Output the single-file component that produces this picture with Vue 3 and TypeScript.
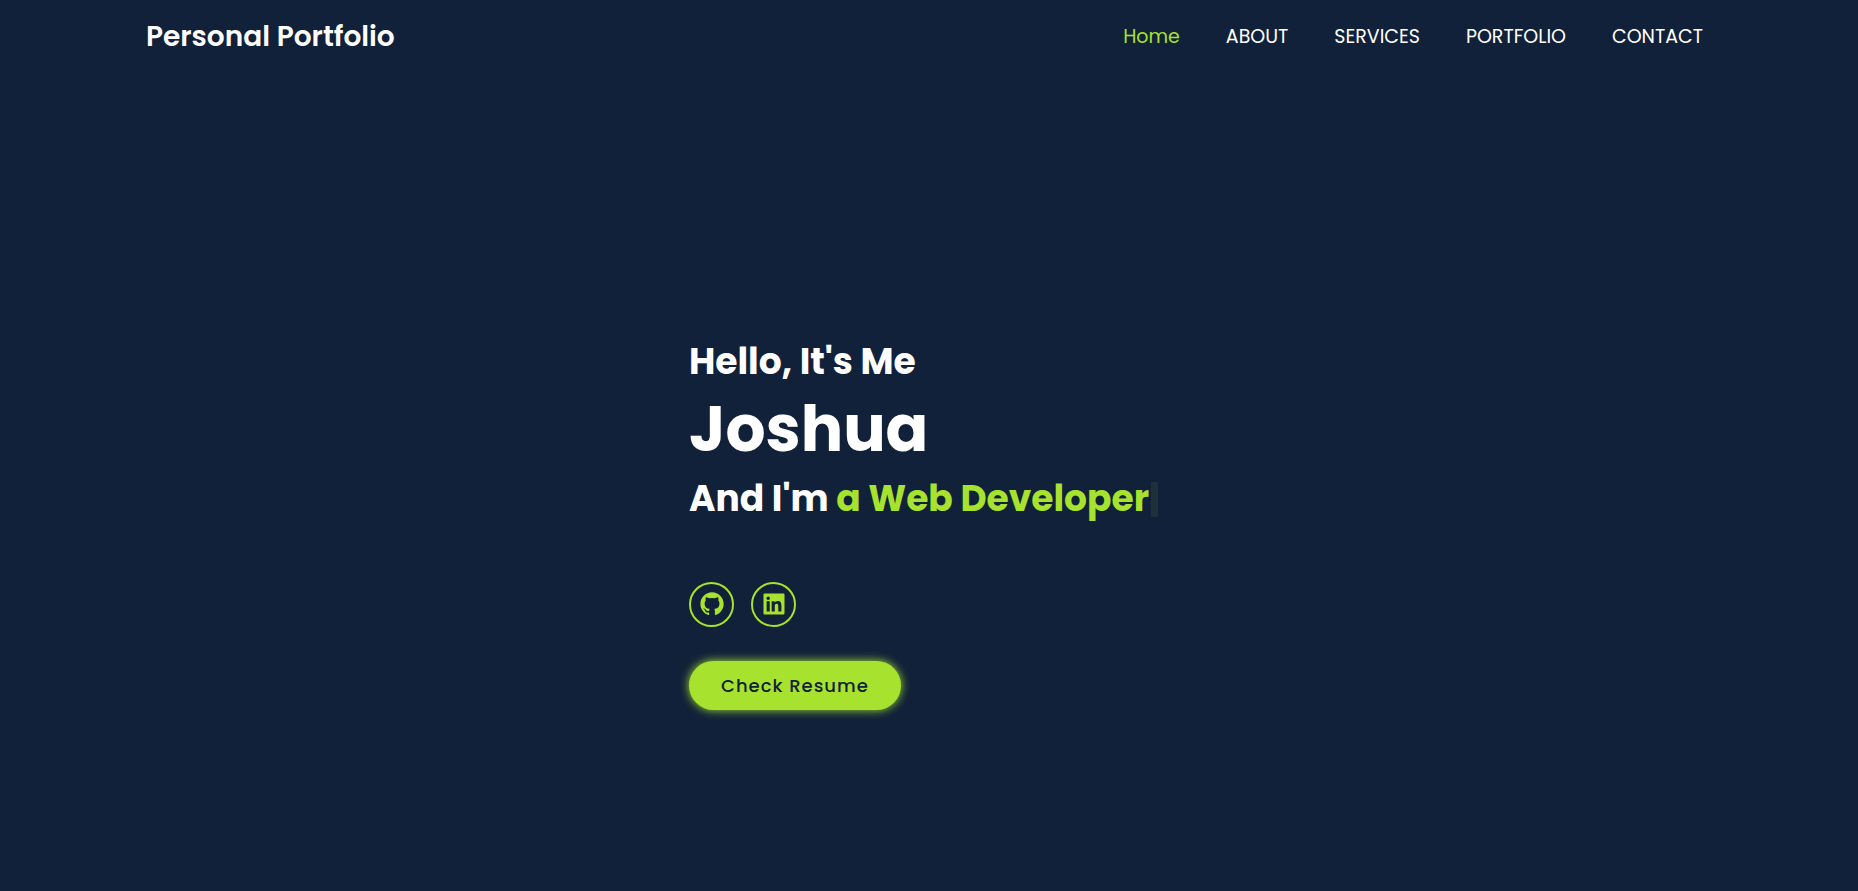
<script setup lang="ts">
interface NavItem {
  label: string
  href: string
}

const navItems: NavItem[] = [
  { label: 'Home', href: '#home' },
  { label: 'ABOUT', href: '#about' },
  { label: 'SERVICES', href: '#services' },
  { label: 'PORTFOLIO', href: '#portfolio' },
  { label: 'CONTACT', href: '#contact' },
]
const activeItem = 'Home'
</script>

<template>
  <div class="page">
    <header class="header">
      <a class="logo" href="#home">Personal Portfolio</a>
      <nav class="navbar">
        <a
          v-for="item in navItems"
          :key="item.label"
          :href="item.href"
          :class="{ active: item.label === activeItem }"
        >{{ item.label }}</a>
      </nav>
    </header>

    <main id="home" class="home">
      <div class="content">
        <h3>Hello, It's Me</h3>
        <h1>Joshua</h1>
        <h3 class="role">And I'm <span class="typed">a Web Developer</span><i class="cursor"></i></h3>
        <div class="social">
          <a href="#github" aria-label="GitHub">
            <svg viewBox="0 0 24 24" aria-hidden="true">
              <path d="M12.026 2c-5.509 0-9.974 4.465-9.974 9.974 0 4.406 2.857 8.145 6.821 9.465.499.09.679-.217.679-.481 0-.237-.008-.865-.011-1.696-2.775.602-3.361-1.338-3.361-1.338-.452-1.152-1.107-1.459-1.107-1.459-.905-.619.069-.605.069-.605 1.002.07 1.527 1.028 1.527 1.028.89 1.524 2.336 1.084 2.902.829.091-.645.351-1.085.635-1.334-2.214-.251-4.542-1.107-4.542-4.93 0-1.087.389-1.979 1.024-2.675-.101-.253-.446-1.268.099-2.64 0 0 .837-.269 2.742 1.021a9.582 9.582 0 0 1 2.496-.336 9.554 9.554 0 0 1 2.496.336c1.906-1.291 2.742-1.021 2.742-1.021.545 1.372.203 2.387.099 2.64.64.696 1.024 1.587 1.024 2.675 0 3.833-2.33 4.675-4.552 4.922.355.308.675.916.675 1.846 0 1.334-.012 2.41-.012 2.737 0 .267.178.577.687.479C19.146 20.115 22 16.379 22 11.974 22 6.465 17.535 2 12.026 2z" />
            </svg>
          </a>
          <a href="#linkedin" aria-label="LinkedIn">
            <svg viewBox="0 0 24 24" aria-hidden="true">
              <path d="M20 3H4a1 1 0 0 0-1 1v16a1 1 0 0 0 1 1h16a1 1 0 0 0 1-1V4a1 1 0 0 0-1-1zM8.339 18.337H5.667v-8.59h2.672v8.59zM7.003 8.574a1.548 1.548 0 1 1 0-3.096 1.548 1.548 0 0 1 0 3.096zm11.335 9.763h-2.669V14.16c0-.996-.018-2.277-1.388-2.277-1.39 0-1.601 1.086-1.601 2.207v4.248h-2.667v-8.59h2.56v1.174h.037c.355-.675 1.227-1.387 2.524-1.387 2.704 0 3.203 1.778 3.203 4.092v4.71z" />
            </svg>
          </a>
        </div>
        <a class="resume" href="#resume">Check Resume</a>
      </div>
    </main>
  </div>
</template>

<style>
body {
  margin: 0;
  background: #112139;
}
</style>

<style scoped>
.page {
  box-sizing: border-box;
  min-height: 100vh;
  display: flex;
  flex-direction: column;
  background: #112139;
  color: #fff;
  font-family: Poppins, Inter, "Liberation Sans", sans-serif;
}

a {
  color: inherit;
  text-decoration: none;
}

.header {
  display: flex;
  justify-content: space-between;
  align-items: center;
  padding: 16px 155px 14px 146px;
}

.logo {
  font-size: 28px;
  font-weight: 600;
  line-height: 42px;
}

.navbar {
  display: flex;
  gap: 46px;
  font-size: 19px;
  line-height: 28px;
}

.active,
.typed {
  color: #a6e22e;
}

.home {
  flex: 1;
  display: flex;
  align-items: center;
  justify-content: center;
  padding-top: 82px;
}

.content {
  width: 480px;
}

h1,
h3 {
  margin: 0;
  font-weight: 700;
}

h3 {
  font-size: 36px;
  line-height: 54px;
}

h1 {
  margin-bottom: 2px;
  font-size: 63px;
  line-height: 81px;
}

.role {
  display: flex;
  align-items: center;
  white-space: pre;
}

.cursor {
  width: 7px;
  height: 35px;
  margin-left: 2px;
  background: #1e3139;
}

.social {
  display: flex;
  gap: 17px;
  margin: 56px 0 34px;
}

.social a {
  box-sizing: border-box;
  width: 45px;
  height: 45px;
  display: flex;
  align-items: center;
  justify-content: center;
  padding-bottom: 2px;
  border: 2px solid #a6e22e;
  border-radius: 50%;
}

.social svg {
  width: 28px;
  height: 28px;
  fill: #a6e22e;
}

.resume {
  display: inline-block;
  padding: 0 32px;
  border-radius: 40px;
  background: #a6e22e;
  box-shadow: 0 0 10px #a6e22e;
  color: #112139;
  font-size: 18px;
  font-weight: 500;
  line-height: 49px;
  letter-spacing: 1px;
}
</style>
